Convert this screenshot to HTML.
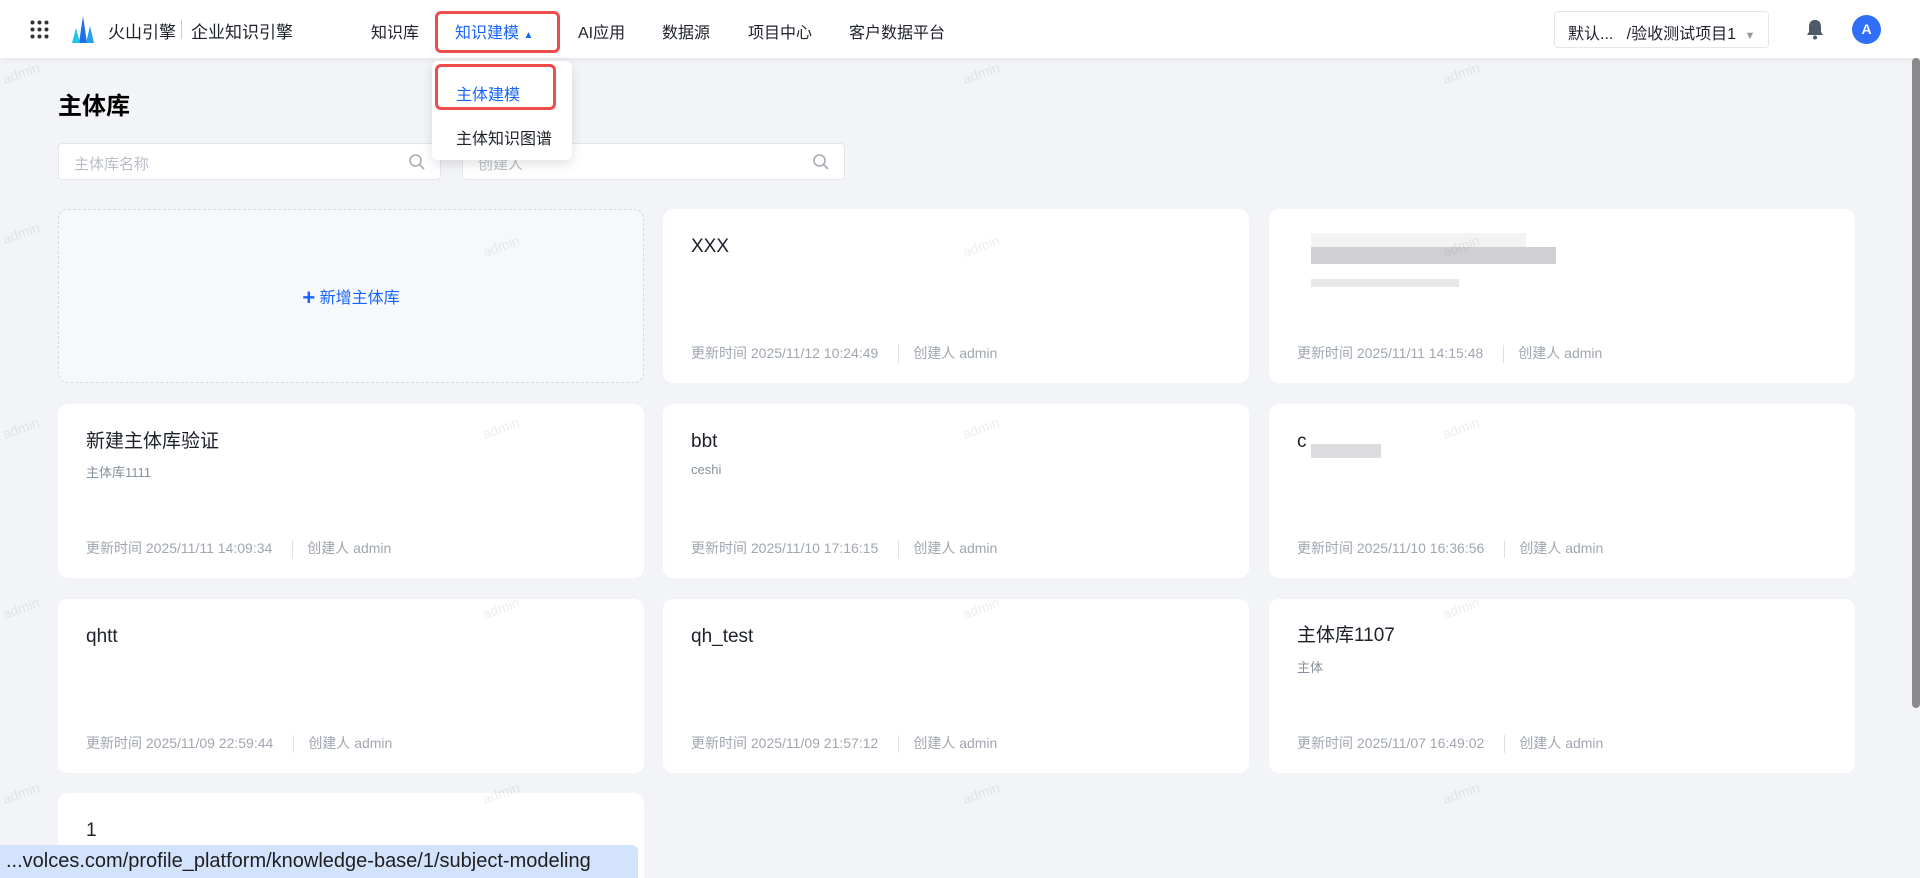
<!DOCTYPE html>
<html style="width:1920px;height:878px;overflow:hidden"><head><meta charset="utf-8"><style>
*{box-sizing:border-box;margin:0;padding:0}
body{width:1920px;height:878px;overflow:hidden;background:#f2f4f8;font-family:"Liberation Sans","Noto Sans CJK SC",sans-serif;position:relative;color:#1d2129}
.hdr{position:absolute;left:0;top:0;width:1920px;height:58px;background:#fff;box-shadow:0 2px 6px rgba(0,0,0,.06);z-index:5}
.nav{position:absolute;top:19px;font-size:16px;color:#1d2129;white-space:nowrap}
.card{position:absolute;background:#fff;border-radius:10px;width:586px;height:174px}
.card .t{position:absolute;left:28px;top:26px;font-size:19px;line-height:24px;color:#1d2129}
.card .s{position:absolute;left:28px;top:58px;font-size:13px;color:#86909c}
.card .f{position:absolute;left:28px;top:134px;font-size:14px;color:#a0a6b0;white-space:nowrap}
.card .f i{display:inline-block;width:1px;height:18px;background:#dde0e5;vertical-align:middle;margin:0 14px 0 20px}
.inp{position:absolute;top:143px;height:37px;width:383px;background:#fff;border:1px solid #e3e6eb;border-radius:4px;font-size:15px;color:#b9bec6;padding:9px 15px}
.inp svg{position:absolute;right:14px;top:9px}
.wm{position:absolute;font-size:14px;color:rgba(0,0,0,.07);transform:rotate(-20deg)}
</style></head><body>
<div class="hdr">
<svg style="position:absolute;left:30px;top:20px" width="19" height="19"><g fill="#333"><circle cx="2.5" cy="2.5" r="2"/><circle cx="9.5" cy="2.5" r="2"/><circle cx="16.5" cy="2.5" r="2"/><circle cx="2.5" cy="9.5" r="2"/><circle cx="9.5" cy="9.5" r="2"/><circle cx="16.5" cy="9.5" r="2"/><circle cx="2.5" cy="16.5" r="2"/><circle cx="9.5" cy="16.5" r="2"/><circle cx="16.5" cy="16.5" r="2"/></g></svg>
<svg style="position:absolute;left:72px;top:16px" width="22" height="27"><path d="M11 0 L15 27 H7Z" fill="#1f6fe8"/><path d="M4 12 L8 27 H0Z" fill="#23c4e8"/><path d="M18 10 L22 27 H14Z" fill="#2aa0ec"/></svg>
<div class="nav" style="left:108px;top:18px;font-size:17px">火山引擎</div>
<div style="position:absolute;left:181px;top:20px;width:1px;height:19px;background:#ccc"></div>
<div class="nav" style="left:191px;top:18px;font-size:17px">企业知识引擎</div>
<div class="nav" style="left:371px">知识库</div>
<div class="nav" style="left:455px;color:#1664ff">知识建模 <span style="font-size:10px">▲</span></div>
<div style="position:absolute;left:435px;top:11px;width:125px;height:42px;border:3px solid #f04b4b;border-radius:6px"></div>
<div class="nav" style="left:578px">AI应用</div>
<div class="nav" style="left:662px">数据源</div>
<div class="nav" style="left:748px">项目中心</div>
<div class="nav" style="left:849px">客户数据平台</div>
<div style="position:absolute;left:1554px;top:11px;width:215px;height:37px;border:1px solid #e3e6eb;border-radius:4px;font-size:16px;padding:8px 13px;white-space:nowrap">默认...&nbsp;&nbsp; /验收测试项目1 <span style="color:#999;font-size:11px;margin-left:4px">▼</span></div>
<svg style="position:absolute;left:1806px;top:19px" width="18" height="21"><path d="M9 1 C4 1 3 5 3 8 V13 L1 16 H17 L15 13 V8 C15 5 14 1 9 1Z" fill="#4e5969"/><circle cx="9" cy="18.5" r="2" fill="#4e5969"/></svg>
<div style="position:absolute;left:1852px;top:15px;width:29px;height:29px;border-radius:50%;background:#2f6ef6;color:#fff;font-size:14px;font-weight:bold;text-align:center;line-height:29px">A</div>
</div>
<div style="position:absolute;left:432px;top:61px;width:140px;height:99px;background:#fff;border-radius:6px;box-shadow:0 4px 12px rgba(0,0,0,.12);z-index:6">
<div style="position:absolute;left:24px;top:20px;font-size:16px;color:#1664ff">主体建模</div>
<div style="position:absolute;left:3px;top:3px;width:121px;height:46px;border:3px solid #f04b4b;border-radius:6px"></div>
<div style="position:absolute;left:24px;top:64px;font-size:16px">主体知识图谱</div>
</div>
<div style="position:absolute;left:58px;top:86px;font-size:24px;font-weight:bold;color:#000">主体库</div>
<div class="inp" style="left:58px">主体库名称<svg width="18" height="18"><circle cx="7.5" cy="7.5" r="5.5" fill="none" stroke="#a8adb5" stroke-width="1.6"/><path d="M11.5 11.5 L16 16" stroke="#a8adb5" stroke-width="1.8"/></svg></div>
<div class="inp" style="left:462px">创建人<svg width="18" height="18"><circle cx="7.5" cy="7.5" r="5.5" fill="none" stroke="#a8adb5" stroke-width="1.6"/><path d="M11.5 11.5 L16 16" stroke="#a8adb5" stroke-width="1.8"/></svg></div>
<div class="card" style="left:58px;top:209px;background:#f7f8fa;border:1px dashed #d5d9e0"><div style="position:absolute;width:100%;top:74px;text-align:center;font-size:16px;color:#1664ff"><b style="font-size:22px;vertical-align:-2px">+</b> 新增主体库</div></div>
<div class="card" style="left:663px;top:209px"><div class="t">XXX</div><div class="f">更新时间 2025/11/12 10:24:49<i></i>创建人 admin</div></div>
<div class="card" style="left:1269px;top:209px"><div style="position:absolute;left:42px;top:24px;width:215px;height:14px;background:#f3f3f3"></div><div style="position:absolute;left:42px;top:38px;width:245px;height:17px;background:#d0d0d2"></div><div style="position:absolute;left:42px;top:70px;width:148px;height:8px;background:#e8e8ea"></div><div class="f">更新时间 2025/11/11 14:15:48<i></i>创建人 admin</div></div>
<div class="card" style="left:58px;top:404px"><div class="t">新建主体库验证</div><div class="s">主体库1111</div><div class="f">更新时间 2025/11/11 14:09:34<i></i>创建人 admin</div></div>
<div class="card" style="left:663px;top:404px"><div class="t">bbt</div><div class="s">ceshi</div><div class="f">更新时间 2025/11/10 17:16:15<i></i>创建人 admin</div></div>
<div class="card" style="left:1269px;top:404px"><div class="t">c</div><div style="position:absolute;left:42px;top:40px;width:70px;height:14px;background:#dcdcde"></div><div class="f">更新时间 2025/11/10 16:36:56<i></i>创建人 admin</div></div>
<div class="card" style="left:58px;top:599px"><div class="t">qhtt</div><div class="f">更新时间 2025/11/09 22:59:44<i></i>创建人 admin</div></div>
<div class="card" style="left:663px;top:599px"><div class="t">qh_test</div><div class="f">更新时间 2025/11/09 21:57:12<i></i>创建人 admin</div></div>
<div class="card" style="left:1269px;top:599px"><div class="t" style="top:25px">主体库1107</div><div class="s">主体</div><div class="f">更新时间 2025/11/07 16:49:02<i></i>创建人 admin</div></div>
<div class="card" style="left:58px;top:793px;height:85px;border-radius:10px 10px 0 0"><div class="t">1</div></div>
<div style="position:absolute;left:1912px;top:58px;width:8px;height:650px;background:#8a8a8a;border-radius:4px"></div>
<div style="position:absolute;left:0;top:845px;width:638px;height:33px;background:#d3e3fd;border-top-right-radius:6px;font-size:20px;color:#1f1f1f;padding:5px 6px;white-space:nowrap">...volces.com/profile_platform/knowledge-base/1/subject-modeling</div>
<div class="wm" style="left:2px;top:225px">admin</div><div class="wm" style="left:482px;top:238px">admin</div><div class="wm" style="left:962px;top:238px">admin</div><div class="wm" style="left:1442px;top:238px">admin</div>
<div class="wm" style="left:2px;top:420px">admin</div><div class="wm" style="left:482px;top:420px">admin</div><div class="wm" style="left:962px;top:420px">admin</div><div class="wm" style="left:1442px;top:420px">admin</div>
<div class="wm" style="left:2px;top:600px">admin</div><div class="wm" style="left:482px;top:600px">admin</div><div class="wm" style="left:962px;top:600px">admin</div><div class="wm" style="left:1442px;top:600px">admin</div>
<div class="wm" style="left:2px;top:785px">admin</div><div class="wm" style="left:482px;top:785px">admin</div><div class="wm" style="left:962px;top:785px">admin</div><div class="wm" style="left:1442px;top:785px">admin</div>
<div class="wm" style="left:2px;top:65px">admin</div><div class="wm" style="left:962px;top:65px">admin</div><div class="wm" style="left:1442px;top:65px">admin</div>
</body></html>
